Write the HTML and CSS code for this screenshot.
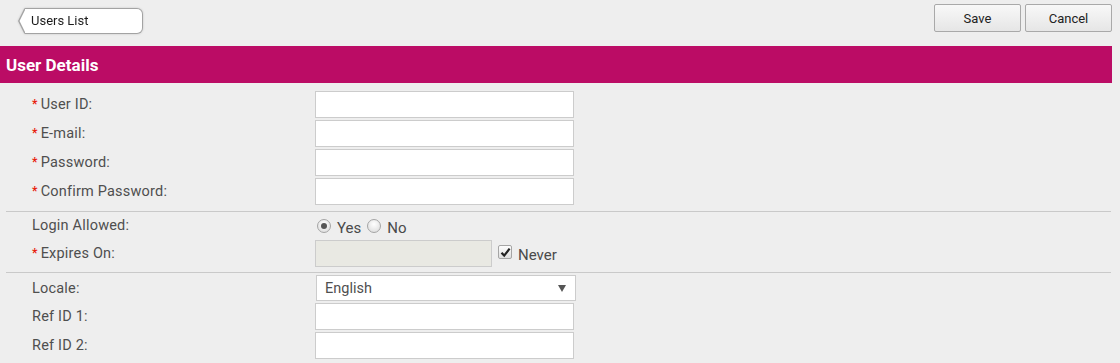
FILE: index.html
```html
<!DOCTYPE html>
<html>
  <head>
    <meta charset="utf-8">
    <title>User Details</title>
    <link rel="stylesheet" href="styles.css">
  </head>
  <body>
    <div class="toolbar">
      <a class="back-button" href="#">
        <svg class="back-arrow" width="7" height="26" viewBox="0 0 7 26">
          <polygon points="7,0.5 0.8,13 7,25.5" fill="#fff"/>
          <polyline points="7,0.5 0.8,13 7,25.5" fill="none" stroke="#a3a3a3" stroke-width="1.4"/>
        </svg>
        <span class="back-label">Users List</span>
      </a>
      <div class="actions">
        <button class="btn">Save</button>
        <button class="btn">Cancel</button>
      </div>
    </div>

    <div class="section-title">User Details</div>

    <div class="form-group group-first">
      <div class="form-row">
        <label class="form-label"><span class="req">*</span>User ID:</label>
        <input class="text-input" type="text">
      </div>
      <div class="form-row">
        <label class="form-label"><span class="req">*</span>E-mail:</label>
        <input class="text-input" type="text">
      </div>
      <div class="form-row">
        <label class="form-label"><span class="req">*</span>Password:</label>
        <input class="text-input" type="password">
      </div>
      <div class="form-row">
        <label class="form-label"><span class="req">*</span>Confirm Password:</label>
        <input class="text-input" type="password">
      </div>
    </div>

    <div class="form-group">
      <div class="form-row row-login">
        <label class="form-label">Login Allowed:</label>
        <div class="radio-set">
          <span class="radio checked"></span><span class="option-text">Yes</span>
          <span class="radio"></span><span class="option-text">No</span>
        </div>
      </div>
      <div class="form-row">
        <label class="form-label"><span class="req">*</span>Expires On:</label>
        <div class="expires">
          <input class="text-input date-input" type="text" disabled>
          <span class="checkbox">
            <svg width="11" height="11" viewBox="0 0 11 11"><path d="M1.5 5.8 L4.2 8.6 L9.6 1.6" fill="none" stroke="#222" stroke-width="2.2"/></svg>
          </span>
          <span class="option-text never">Never</span>
        </div>
      </div>
    </div>

    <div class="form-group group-last">
      <div class="form-row">
        <label class="form-label">Locale:</label>
        <div class="select-box">
          <span>English</span>
          <svg width="8" height="7" viewBox="0 0 8 7"><polygon points="0,0 8,0 4,7" fill="#555"/></svg>
        </div>
      </div>
      <div class="form-row">
        <label class="form-label">Ref ID 1:</label>
        <input class="text-input" type="text">
      </div>
      <div class="form-row">
        <label class="form-label">Ref ID 2:</label>
        <input class="text-input" type="text">
      </div>
    </div>
  </body>
</html>
```

FILE: styles.css
```css
* {
  margin: 0;
  box-sizing: border-box;
}
body {
  background-color: #eeeeee;
  color: #4f4f4f;
  font-family: Roboto, "Liberation Sans", sans-serif;
  font-size: 14px;
  width: 1120px;
  height: 363px;
  overflow: hidden;
}

.toolbar {
  height: 46px;
  display: flex;
  justify-content: space-between;
  align-items: flex-start;
  padding: 4px 8px 0 18px;
}
.back-button {
  display: flex;
  margin-top: 4px;
  text-decoration: none;
  color: #1d1d1d;
  font-size: 13px;
  filter: drop-shadow(0 0 1px rgba(0, 0, 0, 0.15));
}
.back-arrow {
  display: block;
}
.back-label {
  width: 118px;
  height: 26px;
  line-height: 24px;
  padding-left: 6px;
  background: #fff;
  border: 1.4px solid #a3a3a3;
  border-left: none;
  border-radius: 0 6px 6px 0;
}
.actions {
  display: flex;
  gap: 4px;
}
.btn {
  width: 87px;
  height: 28px;
  font-family: Roboto, "Liberation Sans", sans-serif;
  font-size: 13px;
  color: #222;
  background: linear-gradient(#f8f8f8, #e6e6e6);
  border: 1px solid #a9a9a9;
  border-radius: 2px;
}

.section-title {
  width: 1112px;
  height: 37px;
  line-height: 38px;
  padding-left: 6px;
  background-color: #bb0c65;
  color: #fff;
  font-size: 17px;
  font-weight: 700;
}

.form-group {
  width: 1105px;
  margin-left: 6px;
  padding: 0 0 5px 26px;
  border-bottom: 1px solid #c9c9c9;
}
.group-first {
  padding-top: 8px;
  padding-bottom: 6px;
}
.group-last {
  border-bottom: none;
  padding-top: 2px;
}
.form-row {
  display: flex;
  align-items: center;
  margin-bottom: 2px;
}
.form-group .form-row:last-child {
  margin-bottom: 0;
}
.row-login {
  height: 25px;
  margin-top: 1px;
}
.form-label {
  width: 283px;
  flex-shrink: 0;
  font-size: 14.5px;
  letter-spacing: 0.2px;
}
.req {
  color: #e8200c;
  font-size: 12px;
  font-weight: 700;
  margin-right: 3px;
  position: relative;
  top: -1px;
}
.text-input {
  width: 259px;
  height: 27px;
  background: #fff;
  border: 1px solid #cccccc;
  font-family: inherit;
  font-size: 14px;
}
.date-input {
  width: 177px;
  background: #e9e9e3;
}

.radio-set {
  display: flex;
  align-items: center;
  padding-left: 2px;
  padding-top: 1px;
}
.radio {
  width: 14px;
  height: 14px;
  border-radius: 50%;
  border: 1px solid #a5a5a5;
  background: radial-gradient(circle at 50% 35%, #ffffff, #d8d8d8);
  display: flex;
  align-items: center;
  justify-content: center;
}
.radio.checked::after {
  content: "";
  width: 6px;
  height: 6px;
  border-radius: 50%;
  background: #555;
}
.option-text {
  color: #4a4a4a;
  font-size: 15px;
  margin: 3px 6px 0 6px;
}

.expires {
  display: flex;
  align-items: flex-start;
}
.checkbox {
  width: 14px;
  height: 14px;
  margin: 5px 0 0 6px;
  border: 1px solid #a5a5a5;
  border-radius: 2px;
  background: linear-gradient(#fdfdfd, #dedede);
  display: flex;
  align-items: center;
  justify-content: center;
}
.never {
  margin-top: 6px;
}

.select-box {
  width: 260px;
  height: 26px;
  margin-left: 1px;
  padding: 1px 9px 0 8px;
  background: #fff;
  border: 1px solid #cccccc;
  display: flex;
  align-items: center;
  justify-content: space-between;
  color: #4f4f4f;
  font-size: 14.5px;
}
```
